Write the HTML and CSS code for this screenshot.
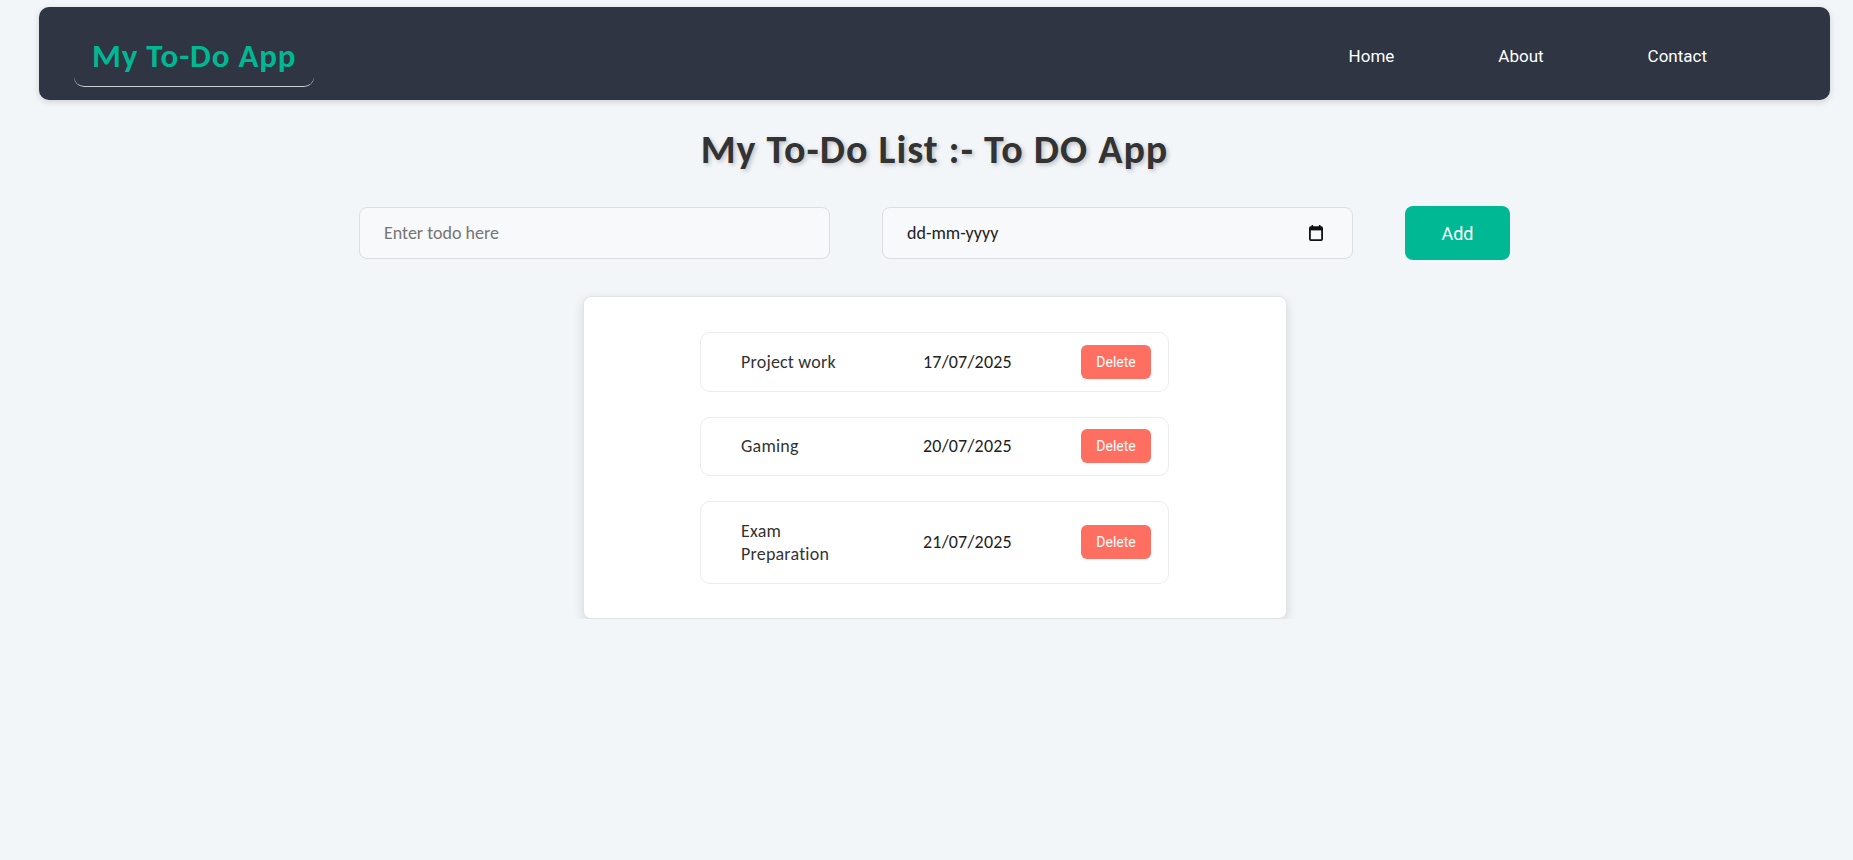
FILE: index.html
```html
<!DOCTYPE html>
<html lang="en">
<head>
<meta charset="utf-8">
<title>My To-Do App</title>
<link rel="stylesheet" href="styles.css">
</head>
<body>
  <nav class="navbar">
    <div class="brand">My To-Do App</div>
    <ul class="nav-links">
      <li><a href="#">Home</a></li>
      <li><a href="#">About</a></li>
      <li><a href="#">Contact</a></li>
    </ul>
  </nav>

  <main class="content">
    <h1 class="title">My To-Do List :- To DO App</h1>

    <div class="add-row">
      <input class="field" type="text" placeholder="Enter todo here">
      <div class="field date-field">
        <span class="date-text">dd-mm-yyyy</span>
        <svg class="cal-icon" width="14" height="16" viewBox="0 0 14 16" aria-hidden="true">
          <rect x="2.5" y="0" width="1.6" height="3" fill="#111"/>
          <rect x="9.9" y="0" width="1.6" height="3" fill="#111"/>
          <rect x="0.9" y="2.2" width="12.2" height="12.9" rx="1" fill="none" stroke="#111" stroke-width="1.8"/>
          <rect x="0.9" y="2.2" width="12.2" height="3.2" fill="#111"/>
        </svg>
      </div>
      <button class="add-btn">Add</button>
    </div>

    <section class="card">
      <div class="todo-item">
        <p class="todo-name">Project work</p>
        <p class="todo-date">17/07/2025</p>
        <button class="del-btn">Delete</button>
      </div>
      <div class="todo-item">
        <p class="todo-name">Gaming</p>
        <p class="todo-date">20/07/2025</p>
        <button class="del-btn">Delete</button>
      </div>
      <div class="todo-item">
        <p class="todo-name">Exam Preparation</p>
        <p class="todo-date">21/07/2025</p>
        <button class="del-btn">Delete</button>
      </div>
    </section>
  </main>
</body>
</html>
```

FILE: styles.css
```css
* {
  box-sizing: border-box;
}

body {
  margin: 0;
  padding: 7px 0 0 16px;
  background: #f3f6f9;
  font-family: Carlito, Lato, "Liberation Sans", sans-serif;
  color: #333;
}

.navbar {
  margin: 0 23px;
  height: 93px;
  background: #2f3542;
  border-radius: 10px;
  box-shadow: 0 2px 6px rgba(0, 0, 0, 0.15);
  display: flex;
  justify-content: space-between;
  align-items: center;
  padding: 0 123px 0 35px;
}

.brand {
  align-self: flex-end;
  margin-bottom: 13px;
  padding: 0 18px 10px;
  border-bottom: 1px solid #c9ccd2;
  border-radius: 10px;
  color: #00b894;
  font-size: 33px;
  letter-spacing: 0.8px;
  font-weight: 700;
  line-height: 39px;
}

.nav-links {
  list-style: none;
  margin: 4px 0 0;
  padding: 0;
  display: flex;
  gap: 104px;
}

.nav-links a {
  color: #ffffff;
  text-decoration: none;
  font-family: "Segoe UI", Roboto, "Noto Sans", sans-serif;
  font-size: 17px;
  font-weight: 400;
}

.content {
  display: flex;
  flex-direction: column;
  align-items: center;
}

.title {
  margin: 27px 0 33px;
  font-size: 40px;
  letter-spacing: 1px;
  line-height: 46px;
  font-weight: 700;
  color: #333;
  text-shadow: 2px 2px 4px rgba(0, 0, 0, 0.22);
}

.add-row {
  display: flex;
  align-items: center;
  gap: 52px;
}

.field {
  width: 471px;
  height: 52px;
  padding: 0 24px;
  background: #f8f9fa;
  border: 1px solid #dcdde0;
  border-radius: 8px;
  font-family: Carlito, Lato, "Liberation Sans", sans-serif;
  font-size: 18px;
  color: #222;
  outline: none;
}

.field::placeholder {
  color: #757575;
}

.date-field {
  display: flex;
  align-items: center;
  justify-content: space-between;
  padding: 0 29px 0 24px;
}

.date-text {
  color: #222;
}

.cal-icon {
  display: block;
}

.add-btn {
  width: 105px;
  height: 54px;
  border: none;
  border-radius: 8px;
  background: #00b894;
  color: #ffffff;
  font-family: "Segoe UI", Roboto, "Noto Sans", sans-serif;
  font-size: 18px;
}

.card {
  margin-top: 36px;
  width: 704px;
  padding: 35px 0 34px;
  background: #ffffff;
  border: 1px solid #e1e3e6;
  border-radius: 8px;
  box-shadow: 0 4px 12px rgba(0, 0, 0, 0.12);
  display: flex;
  flex-direction: column;
  align-items: center;
  gap: 25px;
}

.todo-item {
  width: 469px;
  display: grid;
  grid-template-columns: 182px 158px 70px;
  align-items: center;
  padding: 0 16px 0 40px;
  border: 1px solid #ececec;
  border-radius: 10px;
}

.todo-name,
.todo-date {
  margin: 17.5px 0 17px;
  font-size: 18px;
  letter-spacing: 0.2px;
  line-height: 23px;
  color: #333;
}

.todo-name {
  max-width: 120px;
}

.todo-date {
  color: #222;
}

.del-btn {
  width: 70px;
  height: 34px;
  padding: 0;
  border: none;
  border-radius: 6px;
  background: #ff6f61;
  color: #ffffff;
  font-family: "Segoe UI", Roboto, "Noto Sans", sans-serif;
  font-size: 14px;
}
```
